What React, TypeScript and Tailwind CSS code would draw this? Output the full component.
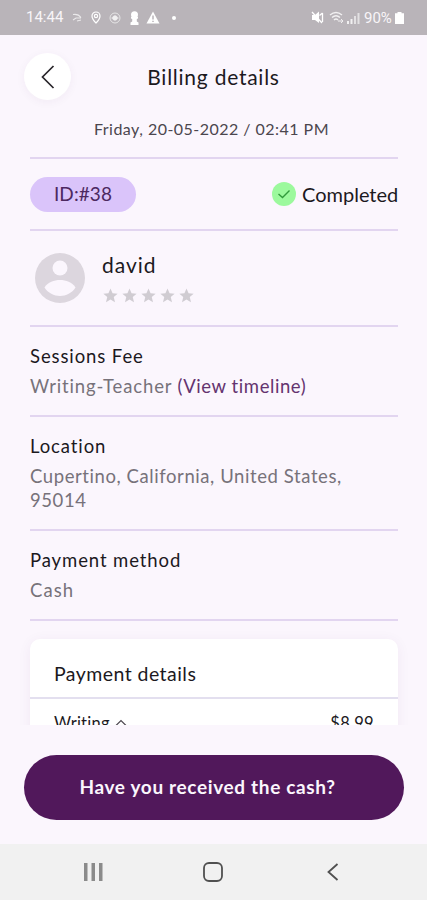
import type { ReactNode } from "react";

const Star = () => (
  <svg width="15" height="15" viewBox="0 0 24 24" fill="#d0ccd2">
    <path d="M12 0.8l3.300 7.500 8.100.7-6.200 5.400 2 8.400L12 18.500l-7.200 4.300 2-8.400L0.600 9l8.100-.7z" />
  </svg>
);

const StatusBar = () => (
  <div className="flex h-[35px] items-center justify-between bg-[#b9b4b9] pl-[26px] pr-[23px] text-[#f8f5f8]">
    <div className="flex items-center">
      <span className="w-[38px] whitespace-nowrap font-[Roboto,sans-serif] text-[15px] leading-none">14:44</span>
      <svg className="ml-[8px] opacity-70" width="11" height="11" viewBox="0 0 11 11" fill="none" stroke="white" strokeWidth="1.2">
        <path d="M1 2.5q5-1 8 3M1 8l3-2h5M5 9l4-1" />
      </svg>
      <svg className="ml-[8px]" width="10" height="13" viewBox="0 0 10 13" fill="none" stroke="white" strokeWidth="1.2">
        <path d="M5 12Q1 8 1 5a4 4 0 0 1 8 0q0 3-4 7z" />
        <circle cx="5" cy="5" r="1.6" />
      </svg>
      <svg className="ml-[8px] opacity-80" width="12" height="12" viewBox="0 0 12 12" fill="none" stroke="white">
        <circle cx="6" cy="6" r="5" opacity="0.8" />
        <circle cx="6" cy="6" r="2.2" fill="white" />
        <path d="M2.5 6h7" />
      </svg>
      <svg className="ml-[9px]" width="9" height="14" viewBox="0 0 9 14" fill="white">
        <circle cx="4.5" cy="3.8" r="3.500" />
        <path d="M1 6h7v1.500L6.800 8v2.500L8.500 11.500V14h-8v-2.500l1.700-1V8L1 7.500z" />
      </svg>
      <svg className="ml-[7px]" width="14" height="13" viewBox="0 0 14 13">
        <path d="M7 0.5L13.5 12.5H0.5z" fill="white" />
        <path d="M7 4.5v4M7 9.7v1.4" stroke="#b9b4b9" strokeWidth="1.5" />
      </svg>
      <span className="ml-[12px] size-[4px] rounded-full bg-white" />
    </div>
    <div className="flex items-center">
      <svg width="14" height="13" viewBox="0 0 14 13">
        <path d="M1 4h3l4-3.500v11.500L4 9H1z" fill="white" />
        <path d="M1 1l10 11M8.500 4.500l3-2.500M11.500 2v9" stroke="white" strokeWidth="1.300" fill="none" />
      </svg>
      <svg className="ml-[4px] opacity-80" width="15" height="13" viewBox="0 0 15 13" fill="none" stroke="white" strokeWidth="1.500">
        <path d="M1 4q6-5 12 0M3 6.500q4-3.500 8 0M5 9q2-2 4 0" />
        <path d="M9 10h5M12 8l2 2-2 2" strokeWidth="1" />
      </svg>
      <svg className="ml-[3px] opacity-80" width="13" height="12" viewBox="0 0 13 12" fill="white">
        <path d="M0 9h2v3H0zM3.500 7h2v5h-2z" />
        <path d="M7 4h2v8H7zM10.500 1h2v11h-2z" opacity="0.750" />
      </svg>
      <span className="ml-[4px] w-[30px] whitespace-nowrap pt-px font-[Roboto,sans-serif] text-[15px] leading-none">90%</span>
      <svg className="ml-[1px]" width="9" height="12" viewBox="0 0 9 12" fill="white">
        <path d="M2.500 0h4v1.200H9V12H0V1.200h2.500z" />
      </svg>
    </div>
  </div>
);

type InfoProps = { title: string; className: string; children: ReactNode };

const Info = ({ title, className, children }: InfoProps) => (
  <section className={`border-b-2 border-[#e2d5f0] pt-[17px] ${className}`}>
    <h2 className="text-[18.5px] leading-[24px] tracking-[0.9px] text-[#1c191e]">{title}</h2>
    <div className="mt-[6px] text-[18.5px] leading-[24px] tracking-[0.58px] text-[#77727a]">{children}</div>
  </section>
);

export default function App() {
  return (
    <div className="flex h-[900px] w-[427px] flex-col overflow-hidden bg-[#fbf6fd] font-[Lato,sans-serif] text-[#1c191e]">
      <StatusBar />

      <main className="h-[690px] overflow-hidden">
        <header className="grid h-[83px] grid-cols-[71px_1fr_71px] items-center">
          <button className="ml-[24px] grid size-[47px] place-items-center rounded-full bg-white shadow-[0_2px_10px_rgba(80,40,100,0.05)]">
            <svg width="14" height="24" viewBox="0 0 14 24" fill="none" stroke="#29262b" strokeWidth="1.700">
              <path d="M12.500 1L1.500 12l11 11" />
            </svg>
          </button>
          <h1 className="whitespace-nowrap text-center text-[21px] tracking-[0.75px]">Billing details</h1>
        </header>

        <div className="pl-[30px] pr-[29px]">
          <p className="h-[41px] whitespace-nowrap border-b-2 border-[#e2d5f0] pl-[64px] text-[16px] leading-[22px] tracking-[0.47px] text-[#4b464e]">
            Friday, 20-05-2022 / 02:41 PM
          </p>

          <div className="flex h-[72px] items-center justify-between border-b-2 border-[#e2d5f0]">
            <span className="flex h-[35px] w-[106px] items-center justify-center rounded-full bg-[#dac4fa] text-[19px] tracking-[0.1px] text-[#4c2860]">ID:#38</span>
            <span className="flex items-center gap-[6px] text-[20px]">
              <svg width="24" height="24" viewBox="0 0 24 24">
                <circle cx="12" cy="12" r="12" fill="#9cf99d" />
                <path d="M6.500 12l4 3.500 7-7" fill="none" stroke="#329a3c" strokeWidth="1.400" />
              </svg>
              <span className="w-[96px] whitespace-nowrap">Completed</span>
            </span>
          </div>

          <div className="flex h-[96px] border-b-2 border-[#e2d5f0]">
            <svg className="ml-[5px] mt-[22px]" width="50" height="50" viewBox="0 0 50 50">
              <circle cx="25" cy="25" r="25" fill="#dcd6de" />
              <circle cx="25" cy="15" r="7.500" fill="#fbf6fd" />
              <path d="M9.500 34.500C13 29 19 27 25 27s12 2 15.500 7.500C37 40 31 43 25 43S13 40 9.500 34.500z" fill="#fbf6fd" />
            </svg>
            <div className="ml-[17px] pt-[20px]">
              <p className="text-[21px] leading-[28px] tracking-[1px]">david</p>
              <div className="ml-[1px] mt-[9px] flex gap-[4px]">
                <Star /><Star /><Star /><Star /><Star />
              </div>
            </div>
          </div>

          <Info title="Sessions Fee" className="h-[90px]">
            <span className="tracking-[0.85px]">Writing-Teacher </span>
            <span className="text-[#64336f]">(View timeline)</span>
          </Info>
          <Info title="Location" className="h-[114px]">
            Cupertino, California, United States,<br />95014
          </Info>
          <Info title="Payment method" className="h-[90px]">
            <span className="tracking-[1.1px]">Cash</span>
          </Info>

          <section className="mt-[18px] h-[160px] rounded-t-[10px] bg-white shadow-[0_2px_14px_rgba(80,40,100,0.06)]">
            <h2 className="h-[60px] border-b-2 border-[#e3dfef] pl-[24px] text-[19.5px] leading-[70px] tracking-[0.45px]">Payment details</h2>
            <div className="flex justify-between px-[24px] pt-[12px] text-[16.5px] leading-[24px]">
              <span className="flex items-start gap-[5px] tracking-[0.25px]">
                Writing
                <svg className="mt-[8px]" width="12" height="7" viewBox="0 0 12 7" fill="none" stroke="#4b464e" strokeWidth="1.200">
                  <path d="M1 6.500l5-5 5 5" />
                </svg>
              </span>
              <span className="tracking-[0.3px]">$8.99</span>
            </div>
          </section>
        </div>
      </main>

      <footer className="z-10 h-[119px] rounded-t-[24px] bg-[#fbf6fd] pl-[24px] pr-[23px] pt-[30px]">
        <button className="h-[65px] w-full whitespace-nowrap rounded-full bg-[#51185b] pr-[13px] text-[19px] font-bold tracking-[0.65px] text-[#fbf6fd]">
          Have you received the cash?
        </button>
      </footer>

      <nav className="flex h-[56px] items-center bg-[#f1f1f1]">
        <svg className="ml-[84px]" width="19" height="18" viewBox="0 0 19 18" fill="#8b8b8b">
          <path d="M0 0h3.500v18H0zM7.500 0H11v18H7.500zM15 0h3.500v18H15z" />
        </svg>
        <svg className="ml-[100px]" width="20" height="20" viewBox="0 0 20 20" fill="none" stroke="#505050" strokeWidth="1.800">
          <rect x="1" y="1" width="18" height="18" rx="5" />
        </svg>
        <svg className="ml-[104px]" width="12" height="18" viewBox="0 0 12 18" fill="none" stroke="#505050" strokeWidth="1.800">
          <path d="M10.500 1L1.500 9l9 8" />
        </svg>
      </nav>
    </div>
  );
}
